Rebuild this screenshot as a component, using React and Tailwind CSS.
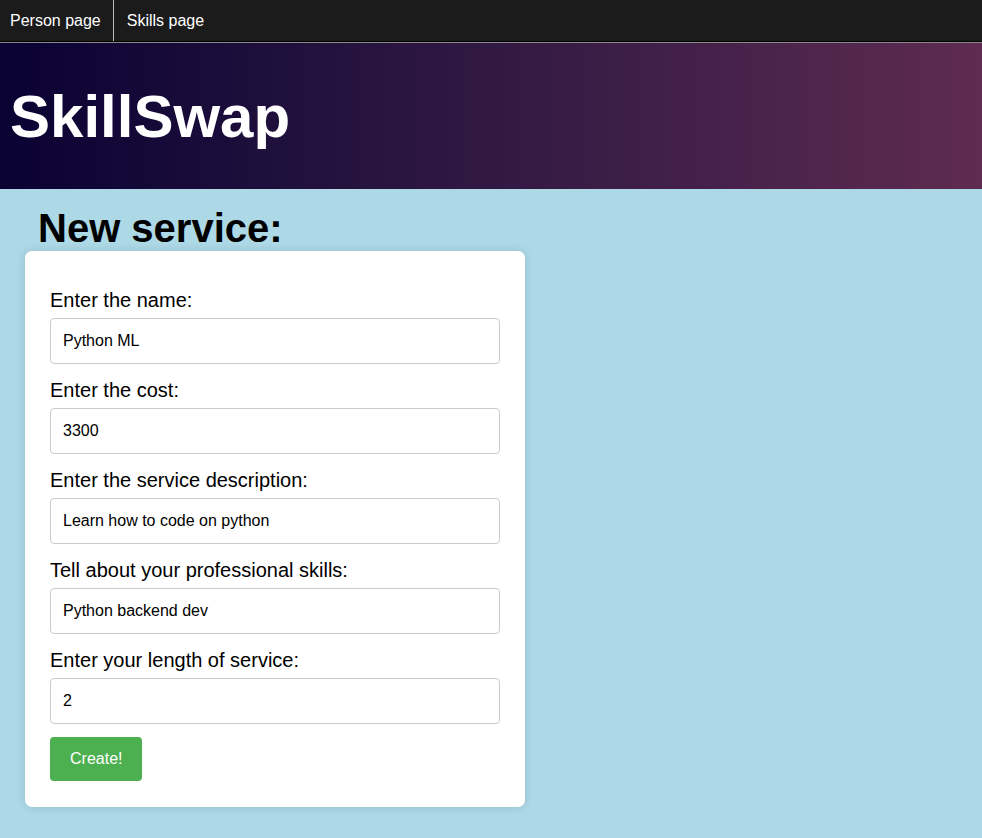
import { useState } from "react";

const fields = [
  { key: "name", label: "Enter the name:", value: "Python ML" },
  { key: "cost", label: "Enter the cost:", value: "3300" },
  { key: "description", label: "Enter the service description:", value: "Learn how to code on python" },
  { key: "skills", label: "Tell about your professional skills:", value: "Python backend dev" },
  { key: "experience", label: "Enter your length of service:", value: "2" },
];

function NavBar() {
  return (
    <nav className="flex h-[42px] border-b border-black bg-[#1b1b1b] text-[16px] text-white">
      <a href="#" className="flex items-center border-r border-[#bbb] pl-[10px] pr-[12px]">Person page</a>
      <a href="#" className="flex items-center pl-[13px] pr-[12px]">Skills page</a>
    </nav>
  );
}

function Header() {
  return (
    <header className="flex h-[147px] items-center border-t border-[#8a8a8a] bg-gradient-to-r from-[#0a0233] to-[#5f2b51] pl-[10px] pt-[2px]">
      <h1 className="text-[60px] font-bold leading-none text-white">SkillSwap</h1>
    </header>
  );
}

export default function App() {
  const [form, setForm] = useState(() => Object.fromEntries(fields.map((f) => [f.key, f.value])));

  function update(key, value) {
    setForm((cur) => ({ ...cur, [key]: value }));
  }

  return (
    <div className="min-h-screen bg-[#add8e6] font-['Liberation_Sans',Arial,sans-serif] text-black">
      <NavBar />
      <Header />
      <main className="px-[25px] pb-[30px]">
        <h2 className="mt-[17px] pl-[13px] text-[40px] font-bold leading-[45px]">New service:</h2>
        <form
          className="w-[500px] rounded-[7px] bg-white px-[25px] pt-[38px] pb-[26px] shadow-[0_0_10px_rgba(0,0,0,0.12)]"
          onSubmit={(e) => e.preventDefault()}
        >
          {fields.map((f) => (
            <div key={f.key} className="mb-[15px] last-of-type:mb-[13px]">
              <label htmlFor={f.key} className="mb-[7px] block text-[20px] leading-[22px]">{f.label}</label>
              <input
                id={f.key}
                value={form[f.key]}
                onChange={(e) => update(f.key, e.target.value)}
                className="block h-[46px] w-[450px] rounded-[4px] border border-[#ccc] px-[12px] text-[16px] leading-5 outline-none"
              />
            </div>
          ))}
          <button type="submit" className="h-[44px] rounded-[4px] bg-[#4caf50] px-[20px] text-[16px] text-white">Create!</button>
        </form>
      </main>
    </div>
  );
}
